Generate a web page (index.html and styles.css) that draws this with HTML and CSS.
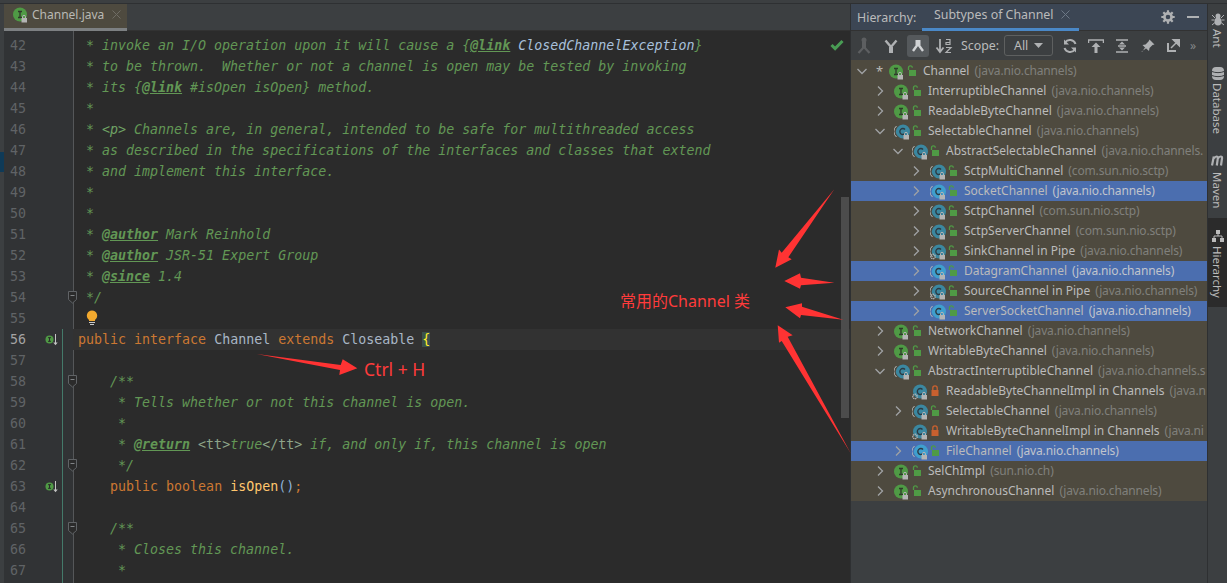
FILE: index.html
```html
<!DOCTYPE html>
<html lang="en">
<head>
<meta charset="utf-8">
<title>Channel.java</title>
<link rel="stylesheet" href="styles.css">
</head>
<body>
<svg class="defs" width="0" height="0" aria-hidden="true">
  <symbol id="i-iface" viewBox="0 0 16 16">
    <circle cx="7" cy="7.5" r="7" fill="#4f9a45"/>
    <path d="M5 4.5h4M7 4.5v6M5 10.5h4" stroke="#2f3a2a" stroke-width="1.3" fill="none"/>
    <path d="M9.5 11V9.8a1.5 1.5 0 0 1 3 0V11" stroke="#b4b4b4" fill="none"/>
    <rect x="8.5" y="11" width="5.5" height="4.5" fill="#b4b4b4"/>
  </symbol>
  <symbol id="i-abs" viewBox="0 0 16 16">
    <path d="M2.5 2A7 7 0 0 0 2.5 13" stroke="#b9b9b9" stroke-width="1" fill="none"/>
    <path d="M9 .5a7 7 0 0 1 0 14a7 7 0 0 1-5.5-2.7a7 7 0 0 1 0-8.6A7 7 0 0 1 9 .5z" fill="currentColor"/>
    <path d="M11 5.4a3 3 0 1 0 0 4.2" stroke="#2c3a42" stroke-width="1.4" fill="none"/>
    <path d="M10.5 11V9.8a1.5 1.5 0 0 1 3 0V11" stroke="#b4b4b4" fill="none"/>
    <rect x="9.5" y="11" width="5.5" height="4.5" fill="#b4b4b4"/>
  </symbol>
  <symbol id="i-absg" viewBox="0 0 16 16">
    <path d="M2.5 2A7 7 0 0 0 2.5 13" stroke="#b9b9b9" stroke-width="1" fill="none"/>
    <path d="M9 .5a7 7 0 0 1 0 14a7 7 0 0 1-5.5-2.7a7 7 0 0 1 0-8.6A7 7 0 0 1 9 .5z" fill="currentColor"/>
    <path d="M11 5.4a3 3 0 1 0 0 4.2" stroke="#2c3a42" stroke-width="1.4" fill="none"/>
    <path d="M10.5 11V9.8a1.5 1.5 0 0 1 3 0V11" stroke="#b4b4b4" fill="none"/>
    <rect x="9.5" y="11" width="5.5" height="4.5" fill="#b4b4b4"/>
    <circle cx="3" cy="12.5" r="2.2" fill="none" stroke="#b4b4b4" stroke-width="1.4" stroke-dasharray="1.2 .6"/>
  </symbol>
  <symbol id="i-impl" viewBox="0 0 16 16">
    <circle cx="8" cy="7.5" r="7" fill="currentColor"/>
    <path d="M10.5 5.4a3 3 0 1 0 0 4.2" stroke="#2c3a42" stroke-width="1.4" fill="none"/>
    <path d="M10.5 11V9.8a1.5 1.5 0 0 1 3 0V11" stroke="#b4b4b4" fill="none"/>
    <rect x="9.5" y="11" width="5.5" height="4.5" fill="#b4b4b4"/>
    <circle cx="3" cy="12.5" r="2.2" fill="none" stroke="#b4b4b4" stroke-width="1.4" stroke-dasharray="1.2 .6"/>
  </symbol>
  <symbol id="i-open" viewBox="0 0 10 12">
    <path d="M1.5 5V2.8a1.9 1.9 0 0 1 3.8 0" stroke="#4f9a45" stroke-width="1.3" fill="none"/>
    <rect x="2" y="5" width="7" height="6" fill="#4f9a45"/>
  </symbol>
  <symbol id="i-closed" viewBox="0 0 10 12">
    <path d="M2.8 5V3a2.2 2.2 0 0 1 4.4 0V5" stroke="#c9602f" stroke-width="1.3" fill="none"/>
    <rect x="1.5" y="5" width="7" height="6" fill="#c9602f"/>
  </symbol>
  <symbol id="i-right" viewBox="0 0 12 12"><path d="M4 1.5L8.5 6L4 10.5" stroke="#a0a2a4" stroke-width="1.3" fill="none"/></symbol>
  <symbol id="i-down" viewBox="0 0 12 12"><path d="M1.5 4L6 8.5L10.5 4" stroke="#a0a2a4" stroke-width="1.3" fill="none"/></symbol>
  <symbol id="i-impl-mark" viewBox="0 0 14 14">
    <circle cx="4.5" cy="6.5" r="4" fill="#4f9a45"/>
    <path d="M3 4.7h3M4.5 4.7v3.6M3 8.3h3" stroke="#2b2b2b" fill="none"/>
    <path d="M10.5 1v9" stroke="#c4c4c4" fill="none"/>
    <path d="M8.3 9.5h4.4l-2.2 2.7z" fill="#c4c4c4"/>
  </symbol>
  <symbol id="i-fold" viewBox="0 0 11 13">
    <path d="M1.5 .5h8v8l-4 3.5l-4-3.5z" fill="#2b2b2b" stroke="#606366"/>
    <path d="M3.5 4.5h4" stroke="#808386"/>
  </symbol>
</svg>

<div class="topstrip"></div>
<div class="workspace">
  <div class="leftstrip"><span class="strip-mark"></span></div>
  <main class="editor-pane">
    <div class="tabs">
      <div class="tab">
        <svg class="tab-icon" width="16" height="16"><use href="#i-iface"/></svg>
        <span>Channel.java</span>
        <svg class="tab-x" width="9" height="9" viewBox="0 0 9 9"><path d="M.5 .5l8 8M8.500 .5l-8 8" stroke="#6f6c64"/></svg>
      </div>
    </div>
    <div class="editor">
      <div class="line"><div class="gutter"><span class="num">42</span></div><div class="code c"> * invoke an I/O operation upon it will cause a {<span class="tag">@link</span> <span class="ref">ClosedChannelException</span>}</div></div>
      <div class="line"><div class="gutter"><span class="num">43</span></div><div class="code c"> * to be thrown.  Whether or not a channel is open may be tested by invoking</div></div>
      <div class="line"><div class="gutter"><span class="num">44</span></div><div class="code c"> * its {<span class="tag">@link</span> #isOpen isOpen} method.</div></div>
      <div class="line"><div class="gutter"><span class="num">45</span></div><div class="code c"> *</div></div>
      <div class="line"><div class="gutter"><span class="num">46</span></div><div class="code c"> * <span class="para">&lt;p&gt;</span> Channels are, in general, intended to be safe for multithreaded access</div></div>
      <div class="line"><div class="gutter"><span class="num">47</span></div><div class="code c"> * as described in the specifications of the interfaces and classes that extend</div></div>
      <div class="line"><div class="gutter"><span class="num">48</span></div><div class="code c"> * and implement this interface.</div></div>
      <div class="line"><div class="gutter"><span class="num">49</span></div><div class="code c"> *</div></div>
      <div class="line"><div class="gutter"><span class="num">50</span></div><div class="code c"> *</div></div>
      <div class="line"><div class="gutter"><span class="num">51</span></div><div class="code c"> * <span class="tag">@author</span> Mark Reinhold</div></div>
      <div class="line"><div class="gutter"><span class="num">52</span></div><div class="code c"> * <span class="tag">@author</span> JSR-51 Expert Group</div></div>
      <div class="line"><div class="gutter"><span class="num">53</span></div><div class="code c"> * <span class="tag">@since</span> 1.4</div></div>
      <div class="line"><div class="gutter"><span class="num">54</span><svg class="fold" width="11" height="13"><use href="#i-fold"/></svg></div><div class="code c"> */</div></div>
      <div class="line"><div class="gutter"><span class="num">55</span></div><div class="code"><svg class="bulb" width="12" height="16" viewBox="0 0 12 16"><path d="M6 .5a5.200 5.200 0 0 1 3 9.400V11H3V9.900A5.200 5.200 0 0 1 6 .5z" fill="#f2a92e"/><path d="M3 12.500h6M4 14.500h4" stroke="#c8c8c8" stroke-width="1.200"/></svg></div></div>
      <div class="line cur chg"><div class="gutter"><span class="num">56</span><svg class="mark" width="14" height="14"><use href="#i-impl-mark"/></svg></div><div class="code"><span class="k">public</span> <span class="k">interface</span> Channel <span class="k">extends</span> Closeable <span class="brace">{</span></div></div>
      <div class="line chg"><div class="gutter"><span class="num">57</span></div><div class="code"></div></div>
      <div class="line chg"><div class="gutter"><span class="num">58</span><svg class="fold" width="11" height="13"><use href="#i-fold"/></svg></div><div class="code c">    /**</div></div>
      <div class="line chg"><div class="gutter"><span class="num">59</span></div><div class="code c">     * Tells whether or not this channel is open.</div></div>
      <div class="line chg"><div class="gutter"><span class="num">60</span></div><div class="code c">     *</div></div>
      <div class="line chg"><div class="gutter"><span class="num">61</span></div><div class="code c">     * <span class="tag">@return</span> <span class="html">&lt;tt&gt;</span>true<span class="html">&lt;/tt&gt;</span> if, and only if, this channel is open</div></div>
      <div class="line chg"><div class="gutter"><span class="num">62</span><svg class="fold" width="11" height="13"><use href="#i-fold"/></svg></div><div class="code c">     */</div></div>
      <div class="line chg"><div class="gutter"><span class="num">63</span><svg class="mark" width="14" height="14"><use href="#i-impl-mark"/></svg></div><div class="code">    <span class="k">public</span> <span class="k">boolean</span> <span class="m">isOpen</span><span class="paren">()</span><span class="k">;</span></div></div>
      <div class="line chg"><div class="gutter"><span class="num">64</span></div><div class="code"></div></div>
      <div class="line chg"><div class="gutter"><span class="num">65</span><svg class="fold" width="11" height="13"><use href="#i-fold"/></svg></div><div class="code c">    /**</div></div>
      <div class="line chg"><div class="gutter"><span class="num">66</span></div><div class="code c">     * Closes this channel.</div></div>
      <div class="line chg"><div class="gutter"><span class="num">67</span></div><div class="code c">     *</div></div>
      <div class="line chg"><div class="gutter"></div><div class="code"></div></div>
      <svg class="check" width="14" height="12" viewBox="0 0 14 12"><path d="M1.500 6l3.600 3.600L12.500 2" stroke="#499c54" stroke-width="3" fill="none"/></svg>
      <div class="scrollbar"></div>
    </div>
  </main>

  <aside class="panel">
    <div class="panel-head">
      <span class="head-label">Hierarchy:</span>
      <div class="head-tab">
        <span>Subtypes of Channel</span>
        <svg width="9" height="9" viewBox="0 0 9 9"><path d="M.5 .5l8 8M8.500 .5l-8 8" stroke="#6c7886"/></svg>
      </div>
      <svg class="head-gear" width="14" height="14" viewBox="0 0 14 14"><circle cx="7" cy="7" r="3.600" fill="none" stroke="#afb1b3" stroke-width="2.600"/><path d="M7 .3v3M7 10.700v3M.3 7h3M10.700 7h3M2.300 2.300l2 2M9.700 9.700l2 2M11.700 2.300l-2 2M4.300 9.700l-2 2" stroke="#afb1b3" stroke-width="2.200"/></svg>
      <svg class="head-min" width="12" height="2"><rect width="12" height="2" fill="#afb1b3"/></svg>
    </div>
    <div class="toolbar">
      <svg class="tool t1" width="16" height="18" viewBox="0 0 16 18"><circle cx="8" cy="3" r="2.500" fill="#5d5f61"/><path d="M8 3v8M8 10L2.500 16M8 10l5.500 6" stroke="#5d5f61" stroke-width="2.200" fill="none"/><rect x="6" y="5" width="4" height="6" fill="#5d5f61"/></svg>
      <svg class="tool t2" width="14" height="16" viewBox="0 0 14 16"><rect x="5" y="9" width="4" height="6" fill="#afb1b3"/><path d="M1.500 2.500L7 9l5.500-6.500" stroke="#afb1b3" stroke-width="2.400" fill="none"/></svg>
      <span class="tool-on"><svg width="14" height="14" viewBox="0 0 14 14"><rect x="4.500" y="1" width="5" height="5" fill="#d0d2d4"/><path d="M7 5L2 12M7 5l5 7" stroke="#d0d2d4" stroke-width="2.400" fill="none"/></svg></span>
      <svg class="tool t4" width="18" height="16" viewBox="0 0 18 16"><path d="M5 1v12M1.500 9.500L5 14l3.500-4.500" stroke="#afb1b3" stroke-width="1.800" fill="none"/><path d="M11 1.500h4v5h-4v-2h4M11 9.500h5l-5 5h5" stroke="#afb1b3" stroke-width="1.200" fill="none"/></svg>
      <span class="scope-label">Scope:</span>
      <div class="scope"><span>All</span><svg width="9" height="5" viewBox="0 0 9 5"><path d="M0 0h9L4.500 5z" fill="#afb1b3"/></svg></div>
      <svg class="tool t6" width="14" height="14" viewBox="0 0 14 14"><path d="M12.500 5A6 6 0 0 0 2 3.500M1.500 9A6 6 0 0 0 12 10.500" stroke="#afb1b3" stroke-width="2" fill="none"/><path d="M1 .5v5h5zM13 13.500v-5H8z" fill="#afb1b3"/></svg>
      <svg class="tool t7" width="16" height="14" viewBox="0 0 16 14"><path d="M.5 4V1h15v3" stroke="#afb1b3" stroke-width="1.500" fill="none"/><path d="M8 3.500L12.500 8h-3v6h-3V8h-3z" fill="#afb1b3"/></svg>
      <svg class="tool t8" width="14" height="14" viewBox="0 0 14 14"><path d="M1 1h12M1 13h12M3 7h8" stroke="#afb1b3" stroke-width="1.500"/><path d="M7 2.500L10 5.500H4zM7 11.500L10 8.500H4z" fill="#afb1b3"/></svg>
      <svg class="tool t9" width="14" height="14" viewBox="0 0 14 14"><path d="M8.500 .5l5 5-2 .5-3 3-.5 3L4 8.500 1 13l-.5-.5L5 9.500 1.500 6l3-.5 3-3z" fill="#afb1b3"/></svg>
      <svg class="tool t10" width="13" height="13" viewBox="0 0 13 13"><path d="M1 4v8h8" stroke="#afb1b3" stroke-width="2" fill="none"/><path d="M4 9l7-7M6 .5h6.500V7z" stroke="#afb1b3" stroke-width="1.500" fill="#afb1b3"/></svg>
      <span class="more">»</span>
    </div>
    <div class="tree">
      <div class="row"><svg class="chev" width="12" height="12"><use href="#i-down"/></svg><span class="star">*</span><svg class="ic" width="16" height="16"><use href="#i-iface"/></svg><svg class="lk" width="10" height="12"><use href="#i-open"/></svg><span class="nm">Channel</span><span class="pk">(java.nio.channels)</span></div>
      <div class="row l1"><svg class="chev" width="12" height="12"><use href="#i-right"/></svg><svg class="ic" width="16" height="16"><use href="#i-iface"/></svg><svg class="lk" width="10" height="12"><use href="#i-open"/></svg><span class="nm">InterruptibleChannel</span><span class="pk">(java.nio.channels)</span></div>
      <div class="row l1"><svg class="chev" width="12" height="12"><use href="#i-right"/></svg><svg class="ic" width="16" height="16"><use href="#i-iface"/></svg><svg class="lk" width="10" height="12"><use href="#i-open"/></svg><span class="nm">ReadableByteChannel</span><span class="pk">(java.nio.channels)</span></div>
      <div class="row l1"><svg class="chev" width="12" height="12"><use href="#i-down"/></svg><svg class="ic" width="16" height="16"><use href="#i-abs"/></svg><svg class="lk" width="10" height="12"><use href="#i-open"/></svg><span class="nm">SelectableChannel</span><span class="pk">(java.nio.channels)</span></div>
      <div class="row l2"><svg class="chev" width="12" height="12"><use href="#i-down"/></svg><svg class="ic" width="16" height="16"><use href="#i-abs"/></svg><svg class="lk" width="10" height="12"><use href="#i-open"/></svg><span class="nm">AbstractSelectableChannel</span><span class="pk">(java.nio.channels.</span></div>
      <div class="row l3"><svg class="chev" width="12" height="12"><use href="#i-right"/></svg><svg class="ic" width="16" height="16"><use href="#i-abs"/></svg><svg class="lk" width="10" height="12"><use href="#i-open"/></svg><span class="nm">SctpMultiChannel</span><span class="pk">(com.sun.nio.sctp)</span></div>
      <div class="row l3 sel"><svg class="chev" width="12" height="12"><use href="#i-right"/></svg><svg class="ic" width="16" height="16"><use href="#i-abs"/></svg><svg class="lk" width="10" height="12"><use href="#i-open"/></svg><span class="nm">SocketChannel</span><span class="pk">(java.nio.channels)</span></div>
      <div class="row l3"><svg class="chev" width="12" height="12"><use href="#i-right"/></svg><svg class="ic" width="16" height="16"><use href="#i-abs"/></svg><svg class="lk" width="10" height="12"><use href="#i-open"/></svg><span class="nm">SctpChannel</span><span class="pk">(com.sun.nio.sctp)</span></div>
      <div class="row l3"><svg class="chev" width="12" height="12"><use href="#i-right"/></svg><svg class="ic" width="16" height="16"><use href="#i-abs"/></svg><svg class="lk" width="10" height="12"><use href="#i-open"/></svg><span class="nm">SctpServerChannel</span><span class="pk">(com.sun.nio.sctp)</span></div>
      <div class="row l3"><svg class="chev" width="12" height="12"><use href="#i-right"/></svg><svg class="ic" width="16" height="16"><use href="#i-absg"/></svg><svg class="lk" width="10" height="12"><use href="#i-open"/></svg><span class="nm">SinkChannel in Pipe</span><span class="pk">(java.nio.channels)</span></div>
      <div class="row l3 sel"><svg class="chev" width="12" height="12"><use href="#i-right"/></svg><svg class="ic" width="16" height="16"><use href="#i-abs"/></svg><svg class="lk" width="10" height="12"><use href="#i-open"/></svg><span class="nm">DatagramChannel</span><span class="pk">(java.nio.channels)</span></div>
      <div class="row l3"><svg class="chev" width="12" height="12"><use href="#i-right"/></svg><svg class="ic" width="16" height="16"><use href="#i-absg"/></svg><svg class="lk" width="10" height="12"><use href="#i-open"/></svg><span class="nm">SourceChannel in Pipe</span><span class="pk">(java.nio.channels)</span></div>
      <div class="row l3 sel"><svg class="chev" width="12" height="12"><use href="#i-right"/></svg><svg class="ic" width="16" height="16"><use href="#i-abs"/></svg><svg class="lk" width="10" height="12"><use href="#i-open"/></svg><span class="nm">ServerSocketChannel</span><span class="pk">(java.nio.channels)</span></div>
      <div class="row l1"><svg class="chev" width="12" height="12"><use href="#i-right"/></svg><svg class="ic" width="16" height="16"><use href="#i-iface"/></svg><svg class="lk" width="10" height="12"><use href="#i-open"/></svg><span class="nm">NetworkChannel</span><span class="pk">(java.nio.channels)</span></div>
      <div class="row l1"><svg class="chev" width="12" height="12"><use href="#i-right"/></svg><svg class="ic" width="16" height="16"><use href="#i-iface"/></svg><svg class="lk" width="10" height="12"><use href="#i-open"/></svg><span class="nm">WritableByteChannel</span><span class="pk">(java.nio.channels)</span></div>
      <div class="row l1"><svg class="chev" width="12" height="12"><use href="#i-down"/></svg><svg class="ic" width="16" height="16"><use href="#i-abs"/></svg><svg class="lk" width="10" height="12"><use href="#i-open"/></svg><span class="nm">AbstractInterruptibleChannel</span><span class="pk">(java.nio.channels.s</span></div>
      <div class="row l2"><span class="chev"></span><svg class="ic" width="16" height="16"><use href="#i-impl"/></svg><svg class="lk" width="10" height="12"><use href="#i-closed"/></svg><span class="nm">ReadableByteChannelImpl in Channels</span><span class="pk">(java.n</span></div>
      <div class="row l2"><svg class="chev" width="12" height="12"><use href="#i-right"/></svg><svg class="ic" width="16" height="16"><use href="#i-abs"/></svg><svg class="lk" width="10" height="12"><use href="#i-open"/></svg><span class="nm">SelectableChannel</span><span class="pk">(java.nio.channels)</span></div>
      <div class="row l2"><span class="chev"></span><svg class="ic" width="16" height="16"><use href="#i-impl"/></svg><svg class="lk" width="10" height="12"><use href="#i-closed"/></svg><span class="nm">WritableByteChannelImpl in Channels</span><span class="pk">(java.ni</span></div>
      <div class="row l2 sel"><svg class="chev" width="12" height="12"><use href="#i-right"/></svg><svg class="ic" width="16" height="16"><use href="#i-abs"/></svg><svg class="lk" width="10" height="12"><use href="#i-open"/></svg><span class="nm">FileChannel</span><span class="pk">(java.nio.channels)</span></div>
      <div class="row l1"><svg class="chev" width="12" height="12"><use href="#i-right"/></svg><svg class="ic" width="16" height="16"><use href="#i-iface"/></svg><svg class="lk" width="10" height="12"><use href="#i-open"/></svg><span class="nm">SelChImpl</span><span class="pk">(sun.nio.ch)</span></div>
      <div class="row l1"><svg class="chev" width="12" height="12"><use href="#i-right"/></svg><svg class="ic" width="16" height="16"><use href="#i-iface"/></svg><svg class="lk" width="10" height="12"><use href="#i-open"/></svg><span class="nm">AsynchronousChannel</span><span class="pk">(java.nio.channels)</span></div>
    </div>
  </aside>

  <nav class="sidebar">
    <div class="side-item s-ant">
      <svg width="14" height="13" viewBox="0 0 14 13"><ellipse cx="7" cy="3" rx="2.500" ry="2.500" fill="#afb1b3"/><ellipse cx="7" cy="8.500" rx="3.500" ry="4" fill="#afb1b3"/><path d="M1 2l3 3M13 2l-3 3M.5 7h3M13.500 7h-3M1 12l3-2.500M13 12l-3-2.500" stroke="#afb1b3"/></svg>
      <span>Ant</span>
    </div>
    <div class="side-item s-db">
      <svg width="14" height="13" viewBox="0 0 14 13"><rect x="1" y="0" width="12" height="13" rx="4" fill="#afb1b3"/><path d="M1 4.500c3 1.500 9 1.500 12 0M1 8.500c3 1.500 9 1.500 12 0" stroke="#3c3f41" fill="none"/></svg>
      <span>Database</span>
    </div>
    <div class="side-item s-mvn">
      <svg width="14" height="11" viewBox="0 0 14 11"><path d="M1 10.500L2.800 1.500M3 3.500C4.500 .8 7 .8 6.800 3.500L5.800 10.500M7 3.500C8.500 .8 11.500 .8 11 3.500L10 10.500" stroke="#afb1b3" stroke-width="2.200" fill="none"/></svg>
      <span>Maven</span>
    </div>
    <div class="side-item s-hier">
      <svg width="12" height="12" viewBox="0 0 12 12"><rect x="4" y="0" width="4" height="4" fill="#bbb"/><rect x="0" y="8" width="4" height="4" fill="#bbb"/><rect x="8" y="8" width="4" height="4" fill="#bbb"/><path d="M6 4v2M2 8V6h8v2" stroke="#bbb" fill="none"/></svg>
      <span>Hierarchy</span>
    </div>
  </nav>
</div>

<svg class="annot" width="1227" height="583" viewBox="0 0 1227 583" aria-hidden="true">
  <g fill="#ff3333">
    <polygon points="834.300,189.300 788.300,257.300 791.700,259.300 775.300,267.700 779,249.500 781.700,252.700"/>
    <polygon points="834.300,282.700 801,285.300 800,288.700 784.300,281 800,273.300 801,277.700"/>
    <polygon points="843.300,319.700 801,315 800,318.300 785.300,307.300 802,303.300 802,306.700"/>
    <polygon points="850.700,453.300 781.700,341 779,342.700 777.700,325.300 792.700,335.300 787.700,336.700"/>
    <polygon points="256.700,354 340.700,365 342.700,359.300 357.300,368.300 339.300,375 340,370"/>
  </g>
</svg>
<span class="note note-ctrl">Ctrl + H</span>
<span class="note note-chan">常用的Channel 类</span>
</body>
</html>
```
FILE: styles.css
```css
* { box-sizing: border-box; }
html, body { margin: 0; height: 100%; }
body {
  width: 1227px;
  height: 583px;
  overflow: hidden;
  display: flex;
  flex-direction: column;
  background: #3c3f41;
  color: #bbbbbb;
  font-family: "Noto Sans", "Noto Sans CJK SC", sans-serif;
  font-size: 12.4px;
  position: relative;
}
.defs { position: absolute; }
.topstrip { height: 4px; flex: none; background: #3c3f41; border-bottom: 1px solid #2e3032; }
.workspace { flex: 1; display: flex; min-height: 0; }
.leftstrip { width: 4px; flex: none; background: #3c3f41; padding-top: 148px; }
.strip-mark { display: block; height: 20px; background: #0f3a57; }

.editor-pane { width: 846px; flex: none; display: flex; flex-direction: column; min-width: 0; }
.tabs { height: 27px; flex: none; background: #3c3f41; border-bottom: 1px solid #323232; }
.tab {
  width: 123px; height: 27px;
  display: flex; align-items: center;
  padding: 0 0 3px 9px;
  background: #4e4a3f;
  border-bottom: 3px solid #7d8082;
  color: #b9b9b4;
  font-size: 12px;
}
.tab-icon { margin-right: 3px; flex: none; }
.tab-x { margin-left: 8px; flex: none; }

.editor { flex: 1; position: relative; overflow: hidden; padding-top: 4px; background: #2b2b2b;
  font-family: "DejaVu Sans Mono", monospace; font-size: 13.3px; color: #a9b7c6; min-height: 0; }
.editor::before { content: ""; position: absolute; left: 0; top: 0; bottom: 0; width: 69px; background: #313335; border-right: 1px solid #555759; }
.line { height: 21px; display: flex; position: relative; line-height: 21px; }
.gutter { width: 69px; flex: none; display: flex; align-items: center; position: relative; color: #606366; }
.num { padding-left: 6px; width: 40px; flex: none; }
.chg .gutter::after { content: ""; position: absolute; left: 58px; top: 0; bottom: 0; width: 1px; background: #447a6a; }
.mark { margin-left: 1px; }
.fold { position: absolute; left: 63px; top: 4px; z-index: 1; }
.code { flex: 1; padding-left: 5px; white-space: pre; overflow: hidden; }
.cur .code { background: #323232; }
.cur .num { color: #a4a3a3; }
.c { color: #629755; font-style: italic; }
.tag { font-weight: bold; text-decoration: underline; }
.ref { color: #a8c0dc; }
.para { color: #6fa364; }
.html { color: #8ea58a; font-style: normal; }
.k { color: #cc7832; }
.m { color: #ffc66d; }
.paren { color: #8fb3d9; }
.brace { color: #ffef28; background: #3b514d; }
.bulb { margin-left: 8px; vertical-align: -3px; }
.check { position: absolute; right: 6px; top: 8px; }
.scrollbar { position: absolute; right: 1px; top: 166px; width: 8px; height: 221px; background: #4e4e4e; opacity: .95; }

.panel { width: 357px; flex: none; display: flex; flex-direction: column; border-left: 1px solid #2e3032; min-width: 0; background: #3c3f41; }
.panel-head { height: 27px; flex: none; display: flex; align-items: center; background: #3c4654; padding-left: 6px; border-bottom: 1px solid #323232; }
.head-label { width: 65px; flex: none; }
.head-tab { height: 27px; width: 157px; flex: none; display: flex; align-items: center; gap: 7px; padding: 0 0 3px 12px; border-bottom: 3px solid #4a88c7; }
.head-gear { margin-left: 82px; flex: none; }
.head-min { margin-left: 12px; flex: none; }

.toolbar { height: 29px; flex: none; display: flex; align-items: center; padding-left: 5px; }
.tool { flex: none; }
.t2 { margin-left: 12px; }
.tool-on { width: 22px; height: 22px; margin-left: 9px; background: #55595c; border-radius: 3px; display: flex; align-items: center; justify-content: center; flex: none; }
.t4 { margin-left: 6px; }
.scope-label { margin-left: 8px; width: 43px; flex: none; }
.scope { width: 49px; height: 21px; flex: none; border: 1px solid #5e6060; border-radius: 3px; display: flex; align-items: center; justify-content: space-between; padding: 0 9px; }
.t6 { margin-left: 10px; }
.t7 { margin-left: 11px; }
.t8 { margin-left: 11px; }
.t9 { margin-left: 12px; }
.t10 { margin-left: 12px; }
.more { margin-left: 10px; color: #85888a; font-size: 12px; }

.tree { flex: none; background: #4e4a3f; padding-top: 1px; overflow: hidden; font-size: 12px; }
.row { height: 20px; display: flex; align-items: center; white-space: pre; padding-left: 5px; overflow: hidden; }
.l1 { padding-left: 23px; }
.l2 { padding-left: 41px; }
.l3 { padding-left: 59px; }
.sel { background: #4b6eaf; }
.chev { width: 12px; height: 12px; flex: none; margin-right: 8px; }
.star { width: 13px; flex: none; color: #b9b9b4; font-size: 13px; }
.ic { flex: none; color: #3b87a0; margin: 2px 2px 0 0; }
.sel .ic { color: #3f9fce; }
.lk { flex: none; margin-right: 6px; }
.nm { color: #bbbbbb; flex: none; margin-bottom: 2px; }
.pk { color: #80807c; margin: 0 0 2px 5px; letter-spacing: -.15px; flex: none; }
.sel .pk { color: #c0c4cc; }

.sidebar { flex: 1; display: flex; flex-direction: column; border-left: 1px solid #2e3032; background: #3c3f41; padding-top: 9px; min-width: 0; }
.side-item { display: flex; flex-direction: column; align-items: center; gap: 3px; font-size: 11.5px; }
.side-item span { writing-mode: vertical-rl; line-height: 19px; }
.s-db { margin-top: 19px; }
.s-mvn { margin-top: 21px; gap: 6px; }
.s-hier { margin-top: 10px; height: 89px; padding-top: 12px; gap: 4px; background: #2b2b2b; }

.annot { position: absolute; left: 0; top: 0; pointer-events: none; }
.note { position: absolute; color: #ff3b3b; line-height: 20px; white-space: nowrap; }
.note-ctrl { left: 364px; top: 359px; font-size: 17.5px; }
.note-chan { left: 620px; top: 291px; font-size: 16px; }
```
